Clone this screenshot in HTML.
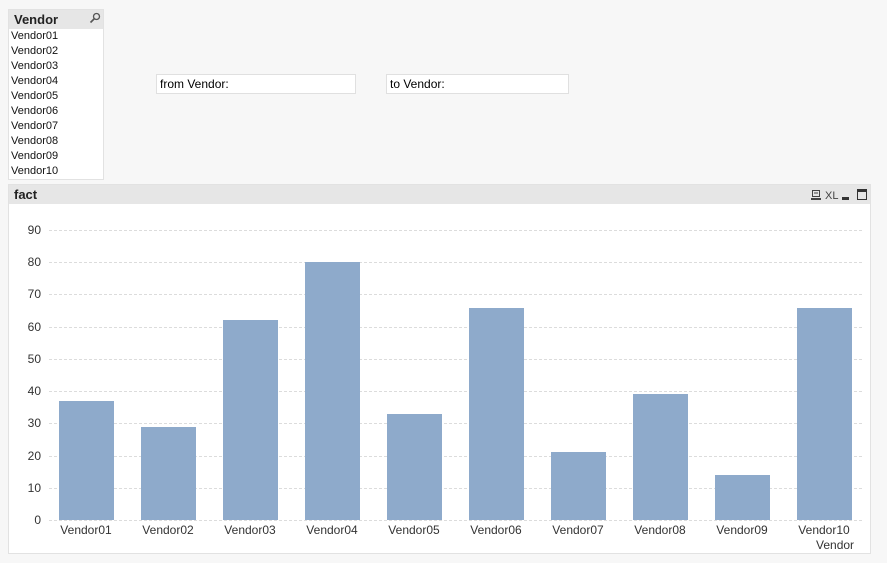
<!DOCTYPE html>
<html><head><meta charset="utf-8"><style>
*{margin:0;padding:0;box-sizing:border-box}
body{width:887px;height:563px;background:#f7f7f7;font-family:"Liberation Sans",sans-serif;position:relative;overflow:hidden;color:#000}
.abs{position:absolute}
.lb{left:8px;top:9px;width:96px;height:171px;background:#fff;border:1px solid #e2e2e2}
.lbh{left:0;top:0;width:94px;height:19px;background:#e6e6e6;font-weight:bold;font-size:13px;padding:2px 0 0 5px;color:#222}
.it{left:2px;font-size:11px;color:#111}
.inp{height:20px;background:#fff;border:1px solid #e0e0e0;font-size:12px;padding:2px 0 0 3px}
.ch{left:8px;top:184px;width:863px;height:370px;background:#fff;border:1px solid #e2e2e2}
.chh{left:0;top:0;width:861px;height:19px;background:#e6e6e6;font-weight:bold;font-size:13px;padding:2px 0 0 5px;color:#222}
.gl{left:49px;width:813px;height:0;border-top:1px dashed #dcdcdc}
.yl{width:30px;text-align:right;font-size:12px;color:#333;left:11px}
.bar{background:#8eaacb;width:55px}
.xl{font-size:12px;color:#333;width:82px;text-align:center}
</style></head><body>
<div class="abs lb">
<div class="abs lbh">Vendor</div>
<svg class="abs" style="left:80px;top:2px" width="12" height="12" viewBox="0 0 12 12"><circle cx="7.5" cy="4.5" r="3" fill="none" stroke="#555" stroke-width="1.3"/><line x1="5.5" y1="6.5" x2="1.5" y2="10.5" stroke="#555" stroke-width="1.6"/></svg>
<div class="abs it" style="top:20px">Vendor01</div>
<div class="abs it" style="top:35px">Vendor02</div>
<div class="abs it" style="top:50px">Vendor03</div>
<div class="abs it" style="top:65px">Vendor04</div>
<div class="abs it" style="top:80px">Vendor05</div>
<div class="abs it" style="top:95px">Vendor06</div>
<div class="abs it" style="top:110px">Vendor07</div>
<div class="abs it" style="top:125px">Vendor08</div>
<div class="abs it" style="top:140px">Vendor09</div>
<div class="abs it" style="top:155px">Vendor10</div>
</div>
<div class="abs inp" style="left:156px;top:74px;width:200px">from Vendor:</div>
<div class="abs inp" style="left:386px;top:74px;width:183px">to Vendor:</div>

<div class="abs ch">
<div class="abs chh">fact</div>
<svg class="abs" style="left:802px;top:3px" width="58" height="14" viewBox="0 0 58 14">
<rect x="1.5" y="2.5" width="7" height="6" fill="none" stroke="#444"/><line x1="3" y1="5" x2="7" y2="5" stroke="#444"/><rect x="0" y="10" width="10" height="2" fill="#444"/>
<text x="14" y="11" font-family="Liberation Sans" font-size="11" fill="#444">XL</text>
<rect x="31" y="9" width="7" height="3" fill="#333"/>
<rect x="46.5" y="1.5" width="9" height="10" fill="none" stroke="#333"/><rect x="46" y="1" width="10" height="3" fill="#333"/>
</svg>
</div>
<div class="abs gl" style="top:230px"></div>
<div class="abs gl" style="top:262px"></div>
<div class="abs gl" style="top:294px"></div>
<div class="abs gl" style="top:327px"></div>
<div class="abs gl" style="top:359px"></div>
<div class="abs gl" style="top:391px"></div>
<div class="abs gl" style="top:423px"></div>
<div class="abs gl" style="top:456px"></div>
<div class="abs gl" style="top:488px"></div>
<div class="abs gl" style="top:520px"></div>
<div class="abs yl" style="top:223px">90</div>
<div class="abs yl" style="top:255px">80</div>
<div class="abs yl" style="top:287px">70</div>
<div class="abs yl" style="top:320px">60</div>
<div class="abs yl" style="top:352px">50</div>
<div class="abs yl" style="top:384px">40</div>
<div class="abs yl" style="top:416px">30</div>
<div class="abs yl" style="top:449px">20</div>
<div class="abs yl" style="top:481px">10</div>
<div class="abs yl" style="top:513px">0</div>

<div class="abs bar" style="left:59px;top:401px;height:119px"></div>
<div class="abs bar" style="left:141px;top:427px;height:93px"></div>
<div class="abs bar" style="left:223px;top:320px;height:200px"></div>
<div class="abs bar" style="left:305px;top:262px;height:258px"></div>
<div class="abs bar" style="left:387px;top:414px;height:106px"></div>
<div class="abs bar" style="left:469px;top:308px;height:212px"></div>
<div class="abs bar" style="left:551px;top:452px;height:68px"></div>
<div class="abs bar" style="left:633px;top:394px;height:126px"></div>
<div class="abs bar" style="left:715px;top:475px;height:45px"></div>
<div class="abs bar" style="left:797px;top:308px;height:212px"></div>

<div class="abs xl" style="left:45px;top:523px">Vendor01</div>
<div class="abs xl" style="left:127px;top:523px">Vendor02</div>
<div class="abs xl" style="left:209px;top:523px">Vendor03</div>
<div class="abs xl" style="left:291px;top:523px">Vendor04</div>
<div class="abs xl" style="left:373px;top:523px">Vendor05</div>
<div class="abs xl" style="left:455px;top:523px">Vendor06</div>
<div class="abs xl" style="left:537px;top:523px">Vendor07</div>
<div class="abs xl" style="left:619px;top:523px">Vendor08</div>
<div class="abs xl" style="left:701px;top:523px">Vendor09</div>
<div class="abs xl" style="left:783px;top:523px">Vendor10</div>
<div class="abs" style="left:816px;top:538px;font-size:12px;color:#333">Vendor</div>
</body></html>
